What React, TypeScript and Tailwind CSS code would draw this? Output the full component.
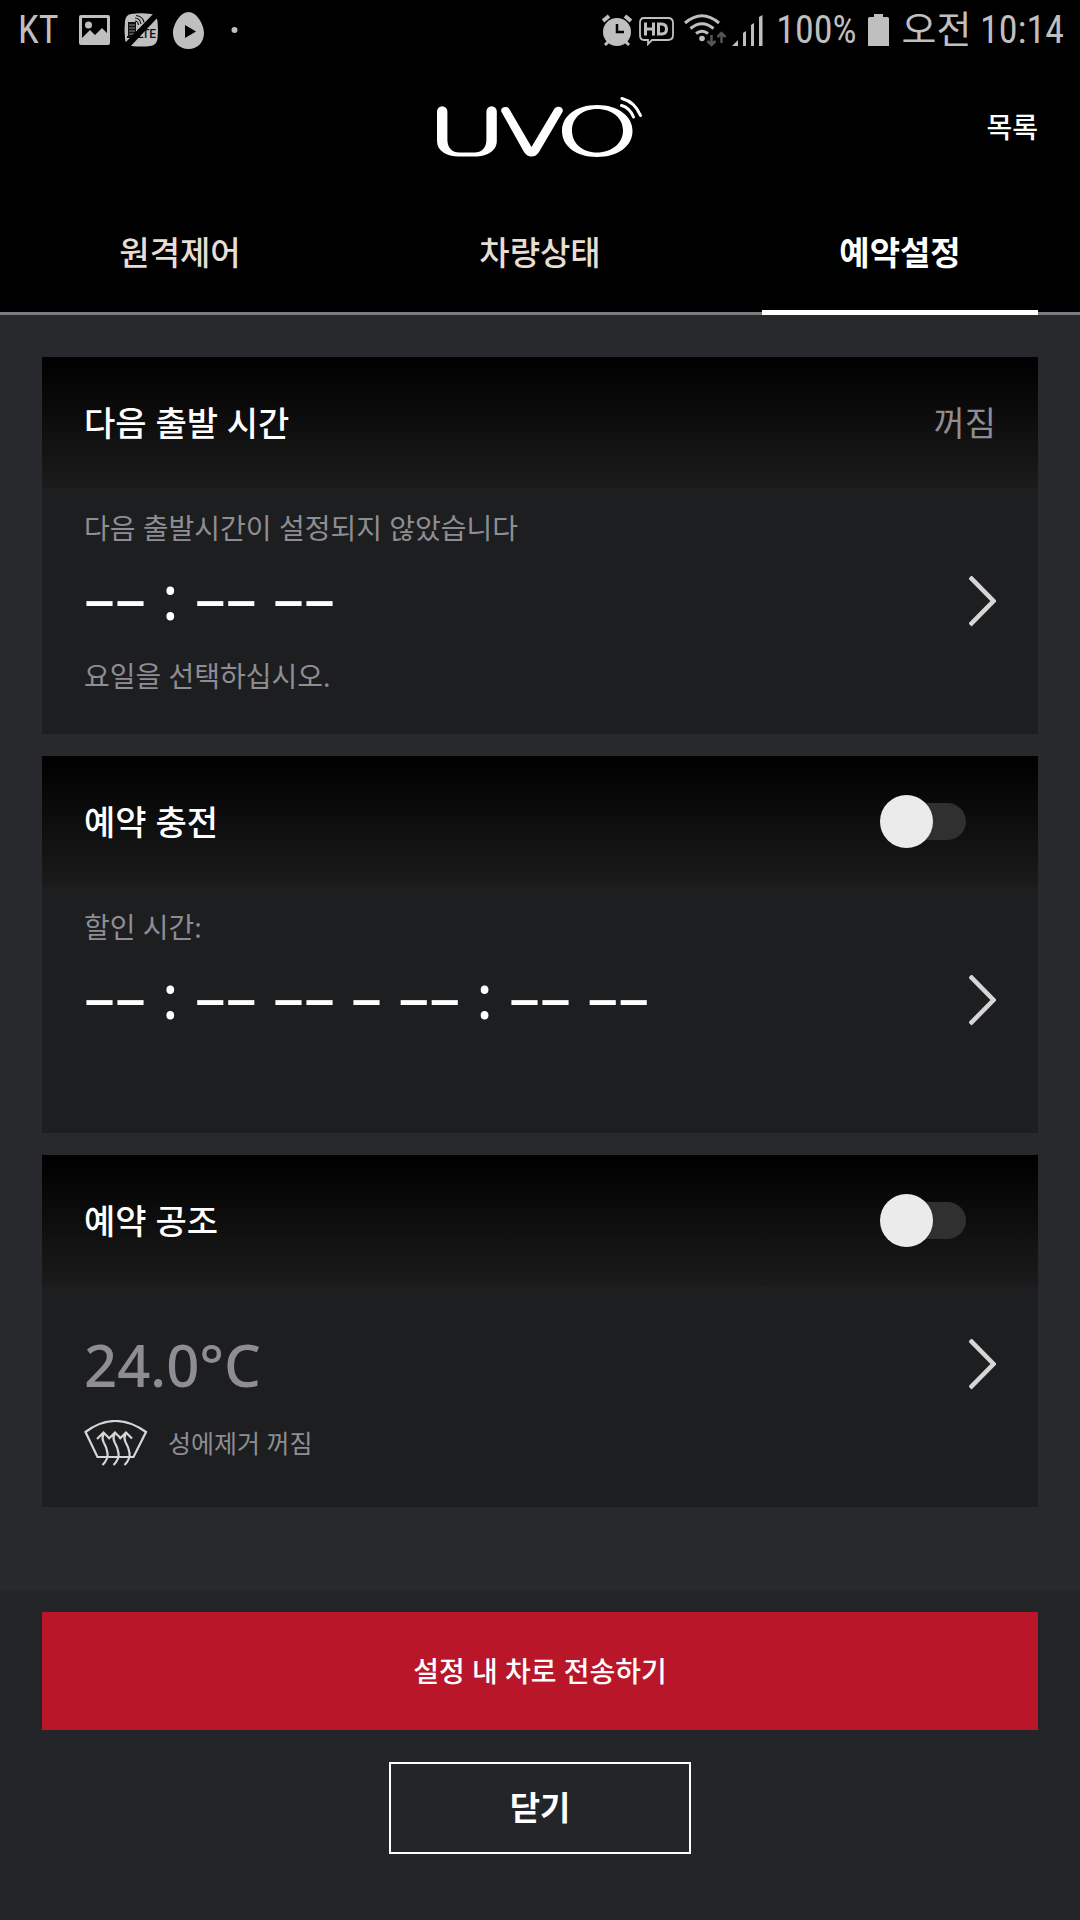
import { useState } from "react";
import type { ReactNode } from "react";

function StatusIconsLeft() {
  return (
    <svg className="h-[37px] w-[160px]" viewBox="76 12 160 37" fill="currentColor">
      {/* gallery */}
      <path
        fillRule="evenodd"
        d="M78 15h27a2 2 0 0 1 2 2v26a2 2 0 0 1-2 2H78a2 2 0 0 1-2-2V17a2 2 0 0 1 2-2zm1 3v20l8-8 5 5 7-7 5 5V18z"
      />
      <circle cx="85.500" cy="25" r="3.500" />
      {/* LTE off */}
      <path d="M128 14q10-1.500 20 0q6 1 6.500 7q1 9 0 18q-1 6-7 7q-9 1-19 0q-6-1-6.500-7q-1-9 0-18q.5-6 6-7z" />
      <path d="M125 22h8v15h-8zM124 36h13v2h-13z" fill="#111" />
      <path d="M126 25h6M126 28h6M126 31h6M126 34h6" stroke="#888" strokeWidth="1" />
      <path
        d="M132 18q5 0 6 6M132 21q3 0 3.500 4M133 15.500q7 1 8 7"
        fill="none"
        stroke="#111"
        strokeWidth="1.200"
      />
      <text x="134" y="38" fontSize="12" fontWeight="500" fill="#111" className="font-['Roboto',sans-serif]">
        LTE
      </text>
      <path d="M121 44L152 12l5 3-31 33z" fill="#000" />
      {/* egg player */}
      <path
        fillRule="evenodd"
        d="M185.500 12c8 0 15.500 12 15.500 21s-6 16-15.500 16S170 42 170 33s7.500-21 15.500-21zM182 25v13l11-6.500z"
      />
      <circle cx="231.500" cy="30" r="3" />
    </svg>
  );
}

function StatusIconsRight() {
  return (
    <svg className="h-[34px] w-[162px]" viewBox="603 13 162 34" fill="none" stroke="currentColor">
      {/* alarm */}
      <circle cx="618" cy="32" r="14" fill="currentColor" stroke="none" />
      <path d="M604 21l6-5M632 21l-6-5" strokeWidth="4" />
      <path d="M606 45l4-4M630 45l-4-4" strokeWidth="3" />
      <path d="M618 24v8h7" stroke="#000" strokeWidth="2.500" />
      {/* HD voice */}
      <path
        d="M645 18h24q5 0 5 5v12q0 5-5 5h-16l-4 4v-4h-4q-4 0-4-5V23q0-5 4-5z"
        strokeWidth="1.800"
      />
      <path
        d="M646.500 22.500v13M654.500 22.500v13M646.500 29h8M659.500 24h3q5 0 5 5t-5 5h-3z"
        strokeWidth="3"
      />
      {/* wifi */}
      <path d="M686 23q17-14.500 34 0M691.500 28.500q11.500-9.500 23 0M697 33.500q6-4.500 12 0" strokeWidth="3" />
      <circle cx="703" cy="38.500" r="2.800" fill="currentColor" stroke="none" />
      <path
        d="M712.500 35v10M708.500 41l4 4 4-4M722.500 43V33M718.500 37l4-4 4 4"
        stroke="#555"
        strokeWidth="2.500"
      />
      {/* signal */}
      <path
        d="M733 46l6-6v6zM744 33l3-2v15h-3zM752 25l3-2v23h-3zM760 17l3.500-2v31H760z"
        fill="currentColor"
        stroke="none"
      />
    </svg>
  );
}

function StatusBar() {
  return (
    <div className="flex h-[60px] items-center justify-between pr-4 pl-[18px] font-['Roboto_Condensed','Roboto','Noto_Sans_CJK_KR',sans-serif] text-[38px] leading-[40px] text-[#bfbfbf]">
      <div className="flex items-center gap-5">
        <span>KT</span>
        <StatusIconsLeft />
      </div>
      <div className="flex items-center gap-3">
        <StatusIconsRight />
        <span>100%</span>
        <svg className="h-[32px] w-[21px]" viewBox="0 0 21 32" fill="currentColor">
          <path d="M6 0h9v3h4.500q1.500 0 1.500 1.500V32H0V4.500Q0 3 1.500 3H6z" />
        </svg>
        <span>오전 10:14</span>
      </div>
    </div>
  );
}

function UvoLogo() {
  return (
    <svg className="h-[62px] w-[206px]" viewBox="437 95 206 62" role="img" aria-label="UVO" fill="#fff">
      <path d="M437 110.500a5.200 5.200 0 0 1 10.400 0V139c0 8 5 12.500 12 12.500h15c7 0 12-4.500 12-12.500v-28.500a5.200 5.200 0 0 1 10.400 0V140c0 10-10 15.500-22 15.500h-16c-12 0-21.800-5.500-21.800-15.500z" />
      <path d="M501.500 111c-2-4 4-7 7.500-3.500L531.500 146l23-38.500c3.500-4 10-1 8 3.500L539 151q-3 4.500-7.500 4.500t-7.500-4.500z" />
      <path
        fillRule="evenodd"
        d="M597 104c21 0 35.500 11 35.500 26S618 156 597 156s-35-11-35-26 14-26 35-26zm0 4c-15 0-25 9-25 21.500s10 22 25 22 26-9.500 26-22-11-21.500-26-21.500z"
      />
      <path
        d="M621.500 104.500q8 2 12 11.500M622 97.500q13 3.500 18.500 17"
        fill="none"
        stroke="#fff"
        strokeWidth="3"
        strokeLinecap="round"
      />
    </svg>
  );
}

function Chevron() {
  return (
    <svg
      className="h-[52px] w-[27px] shrink-0"
      viewBox="0 0 27 52"
      fill="none"
      stroke="#d6d6d6"
      strokeWidth="4.500"
    >
      <path d="M1 1l23.500 24L1 49" />
    </svg>
  );
}

function DefrostIcon() {
  return (
    <svg className="h-[46px] w-[64px]" viewBox="0 0 64 46" fill="none" stroke="#d6d6d6" strokeWidth="2.200">
      <path d="M1.500 12Q31 -10 62 12L49.500 37H13.500z" />
      <path d="M18.500 45q6-6 5-12t-4-11q-2-4 0-8M13 19l6.500-6.500 6 6" />
      <path d="M29.500 45q6-6 5-12t-4-11q-2-4 0-8M24.500 19l6.500-6.500 6 6" />
      <path d="M40.500 45q6-6 5-12t-4-11q-2-4 0-8M35.500 19l6.500-6.500 6 6" />
    </svg>
  );
}

type SwitchProps = {
  id: string;
  checked: boolean;
  onChange: (next: boolean) => void;
};

function Switch({ id, checked, onChange }: SwitchProps) {
  return (
    <span className="relative mr-[30px] flex h-[53px] w-[86px] items-center">
      <input
        id={id}
        type="checkbox"
        role="switch"
        checked={checked}
        onChange={(e) => onChange(e.target.checked)}
        className="peer absolute inset-0 z-10 cursor-pointer appearance-none"
      />
      <span className="ml-2 h-[37px] flex-1 rounded-full bg-[#303030] peer-checked:bg-[#b91629]" />
      <span className="absolute left-0 size-[53px] rounded-full bg-[#ebebeb] peer-checked:left-[33px]" />
    </span>
  );
}

type CardProps = {
  title: ReactNode;
  aside: ReactNode;
  children: ReactNode;
};

function Card({ title, aside, children }: CardProps) {
  return (
    <section className="bg-[#1d1e20]">
      <div className="flex h-[131px] items-center justify-between bg-linear-to-b/srgb from-black to-[#1b1b1b] px-[42px] text-[34px] leading-[40px]">
        <h2 className="font-medium">{title}</h2>
        {aside}
      </div>
      {children}
    </section>
  );
}

function TimeRow({ value }: { value: string }) {
  return (
    <button type="button" className="flex h-16 items-center justify-between text-[62px] leading-[52px] text-white">
      <span className="pb-3">{value}</span>
      <Chevron />
    </button>
  );
}

const tabs = ["원격제어", "차량상태", "예약설정"];

export default function App() {
  const [active, setActive] = useState(2);
  const [charge, setCharge] = useState(false);
  const [climate, setClimate] = useState(false);

  return (
    <div className="flex min-h-screen flex-col bg-[#28292d] font-['Noto_Sans','Noto_Sans_CJK_KR',sans-serif] text-white">
      <header className="bg-black">
        <StatusBar />
        <div className="grid h-[134px] grid-cols-[1fr_auto_1fr] items-center px-[42px]">
          <span />
          <UvoLogo />
          <a href="#list" className="justify-self-end text-[28px] leading-[40px] font-medium">
            목록
          </a>
        </div>
        <nav className="grid h-[121px] grid-cols-3 border-b-3 border-[#7b7b7d]">
          {tabs.map((tab, i) => (
            <button
              key={tab}
              type="button"
              onClick={() => setActive(i)}
              className={
                i === active
                  ? "relative text-[33px] leading-[40px] font-bold"
                  : "relative text-[33px] leading-[40px] font-medium text-[#e6ddd3]"
              }
            >
              {tab}
              {i === active && <span className="absolute inset-x-[42px] -bottom-[3px] h-[5px] bg-white" />}
            </button>
          ))}
        </nav>
      </header>

      <main className="flex flex-1 flex-col gap-[22px] px-[42px] pt-[42px] pb-[84px]">
        <Card title="다음 출발 시간" aside={<span className="text-[#8e8d93]">꺼짐</span>}>
          <div className="flex flex-col gap-[22px] px-[42px] pt-5 pb-[38px] text-[28px] leading-[40px] text-[#8e8d93]">
            <p>다음 출발시간이 설정되지 않았습니다</p>
            <TimeRow value="–– : –– ––" />
            <p>요일을 선택하십시오.</p>
          </div>
        </Card>

        <Card
          title={<label htmlFor="charge">예약 충전</label>}
          aside={<Switch id="charge" checked={charge} onChange={setCharge} />}
        >
          <div className="flex flex-col gap-[22px] px-[42px] pt-5 pb-[100px] text-[28px] leading-[40px] text-[#8e8d93]">
            <p>할인 시간:</p>
            <TimeRow value="–– : –– –– – –– : –– ––" />
          </div>
        </Card>

        <Card
          title={<label htmlFor="climate">예약 공조</label>}
          aside={<Switch id="climate" checked={climate} onChange={setClimate} />}
        >
          <div className="flex flex-col gap-[22px] px-[42px] pt-[47px] pb-10 text-[#8e8d93]">
            <button
              type="button"
              className="flex h-16 items-center justify-between text-[58px] leading-[64px] font-medium"
            >
              <span>24.0°C</span>
              <Chevron />
            </button>
            <div className="flex h-12 items-center gap-5 text-[25px] leading-[40px]">
              <DefrostIcon />
              <span>성에제거 꺼짐</span>
            </div>
          </div>
        </Card>
      </main>

      <footer className="flex flex-col items-center gap-8 bg-[#242529] px-[42px] pt-[21px] pb-[66px]">
        <button type="button" className="h-[118px] w-full bg-[#b91629] text-[28px] leading-[40px] font-medium">
          설정 내 차로 전송하기
        </button>
        <button type="button" className="h-[92px] w-[302px] border-2 border-white text-[33px] leading-[40px] font-bold">
          닫기
        </button>
      </footer>
    </div>
  );
}
